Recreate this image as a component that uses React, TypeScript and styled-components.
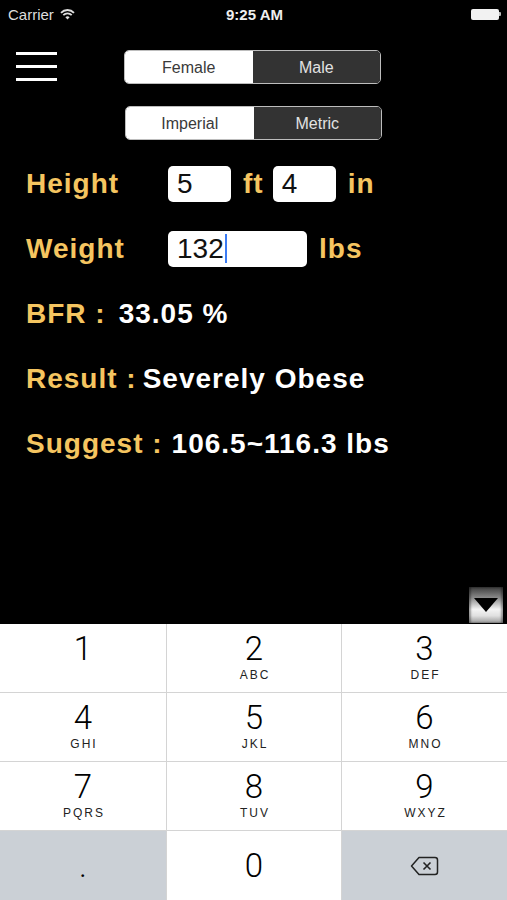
import React from 'react'
import styled, { createGlobalStyle } from 'styled-components'

const GlobalStyle = createGlobalStyle`
  html, body {
    margin: 0;
    padding: 0;
    background: #000;
  }
  * {
    box-sizing: border-box;
  }
`

const Screen = styled.div`
  width: 507px;
  height: 900px;
  background: #000;
  display: flex;
  flex-direction: column;
  font-family: 'Liberation Sans', Arial, sans-serif;
  overflow: hidden;
`

const StatusBar = styled.div`
  height: 28px;
  display: grid;
  grid-template-columns: 1fr auto 1fr;
  align-items: center;
  padding: 0 6px 0 8px;
  color: #ddd;
  font-size: 15px;
`

const Carrier = styled.div`
  display: flex;
  align-items: center;
  gap: 6px;
`

const Clock = styled.div`
  font-weight: 700;
  color: #eee;
`

const Battery = styled.div`
  justify-self: end;
  display: flex;
  align-items: center;
`

const BatteryBody = styled.div`
  width: 28px;
  height: 11px;
  background: #f2f2f2;
  border-radius: 2px;
`

const BatteryNub = styled.div`
  width: 2px;
  height: 4px;
  background: #bbb;
  border-radius: 0 1px 1px 0;
`

const Header = styled.div`
  display: flex;
  padding: 22px 0 0 16px;
`

const Burger = styled.div`
  width: 41px;
  margin-top: 2px;
  display: flex;
  flex-direction: column;
  gap: 10px;
`

const BurgerLine = styled.div`
  height: 3px;
  background: #fff;
`

const Segments = styled.div`
  margin-left: 67px;
  display: flex;
  flex-direction: column;
  gap: 22px;
`

const Segmented = styled.div<{ $shift?: number }>`
  display: flex;
  width: 257px;
  height: 34px;
  margin-left: ${({ $shift }) => $shift || 0}px;
  border: 1.5px solid #bdbdbd;
  border-radius: 5px;
  overflow: hidden;
`

const Segment = styled.div<{ $active?: boolean }>`
  flex: 1;
  display: flex;
  align-items: center;
  justify-content: center;
  font-size: 16px;
  padding-top: 1px;
  background: ${({ $active }) => ($active ? '#333' : '#fff')};
  color: ${({ $active }) => ($active ? '#e2e2e2' : '#3a3a3a')};
`

const Form = styled.div`
  margin-top: 11px;
  padding-left: 26px;
`

const Row = styled.div`
  height: 65px;
  display: flex;
  align-items: center;
`

const Label = styled.span<{ $width?: number }>`
  color: #f5c560;
  font-size: 28px;
  font-weight: 700;
  letter-spacing: 1px;
  width: ${({ $width }) => ($width ? `${$width}px` : 'auto')};
  flex-shrink: 0;
  white-space: nowrap;
`

const Unit = styled(Label)`
  margin: 0 9px 0 12px;
`

const Value = styled.span<{ $gap: number }>`
  color: #fff;
  font-size: 28px;
  font-weight: 700;
  letter-spacing: 1px;
  margin-left: ${({ $gap }) => $gap}px;
  white-space: nowrap;
`

const Field = styled.div<{ $width: number }>`
  width: ${({ $width }) => $width}px;
  height: 36px;
  background: #fff;
  border-radius: 5px;
  display: flex;
  align-items: center;
  padding-left: 9px;
  color: #111;
  font-size: 28px;
`

const Caret = styled.span`
  display: inline-block;
  width: 2px;
  height: 29px;
  margin-left: 1px;
  background: #3b7cf5;
`

const Spacer = styled.div`
  flex: 1;
  display: flex;
  align-items: flex-end;
  justify-content: flex-end;
  padding: 0 4px 1px 0;
`

const HideButton = styled.div`
  width: 34px;
  height: 36px;
  display: flex;
  align-items: center;
  justify-content: center;
  background: linear-gradient(
    to bottom,
    #3c3c3c 0%,
    #8a8a8a 30%,
    #f4f4f4 62%,
    #e0e0e0 80%,
    #9a9a9a 100%
  );
  box-shadow: inset 2px 0 2px rgba(0, 0, 0, 0.35), inset -2px 0 2px rgba(0, 0, 0, 0.35);
`

const Keyboard = styled.div`
  height: 276px;
  display: grid;
  grid-template-columns: 166px 174px 1fr;
  grid-template-rows: 68px 68px 68px 1fr;
  gap: 1px;
  background: #d4d4d4;
`

const Key = styled.div<{ $gray?: boolean }>`
  background: ${({ $gray }) => ($gray ? '#cbd0d6' : '#fff')};
  display: flex;
  flex-direction: column;
  align-items: center;
  justify-content: center;
  color: #000;
`

const Digit = styled.span`
  font-family: Roboto, 'Liberation Sans', sans-serif;
  font-weight: 300;
  font-size: 33px;
  line-height: 30px;
`

const Letters = styled.span`
  font-family: 'Liberation Sans', Arial, sans-serif;
  font-size: 12px;
  letter-spacing: 2px;
  margin-top: 4px;
  margin-right: -2px;
  color: #222;
  height: 14px;
`

const WifiIcon = () => (
  <svg width="15" height="11" viewBox="0 0 15 11">
    <path d="M1 3.8 A9 9 0 0 1 14 3.8" stroke="#ddd" strokeWidth="1.8" fill="none" />
    <path d="M3.3 6.2 A5.8 5.8 0 0 1 11.7 6.2" stroke="#ddd" strokeWidth="1.8" fill="none" />
    <path d="M7.5 10.5 L5.4 8.3 A3 3 0 0 1 9.6 8.3 Z" fill="#ddd" />
  </svg>
)

const DownTriangle = () => (
  <svg width="24" height="14" viewBox="0 0 24 14">
    <polygon points="0,0 24,0 12,14" fill="#000" />
  </svg>
)

const BackspaceIcon = () => (
  <svg width="29" height="20" viewBox="0 0 29 20">
    <path
      d="M9 1.5 H25 A2.5 2.5 0 0 1 27.5 4 V16 A2.5 2.5 0 0 1 25 18.5 H9 L1.5 10 Z"
      fill="none"
      stroke="#222"
      strokeWidth="1.5"
      strokeLinejoin="round"
    />
    <path d="M13.5 6.5 L20.5 13.5 M20.5 6.5 L13.5 13.5" stroke="#222" strokeWidth="1.6" />
  </svg>
)

const keys = [
  { d: '1', l: '' },
  { d: '2', l: 'ABC' },
  { d: '3', l: 'DEF' },
  { d: '4', l: 'GHI' },
  { d: '5', l: 'JKL' },
  { d: '6', l: 'MNO' },
  { d: '7', l: 'PQRS' },
  { d: '8', l: 'TUV' },
  { d: '9', l: 'WXYZ' }
]

const App: React.FC = () => {
  return (
    <Screen>
      <GlobalStyle />
      <StatusBar>
        <Carrier>
          Carrier
          <WifiIcon />
        </Carrier>
        <Clock>9:25 AM</Clock>
        <Battery>
          <BatteryBody />
          <BatteryNub />
        </Battery>
      </StatusBar>

      <Header>
        <Burger>
          <BurgerLine />
          <BurgerLine />
          <BurgerLine />
        </Burger>
        <Segments>
          <Segmented>
            <Segment>Female</Segment>
            <Segment $active>Male</Segment>
          </Segmented>
          <Segmented $shift={1}>
            <Segment>Imperial</Segment>
            <Segment $active>Metric</Segment>
          </Segmented>
        </Segments>
      </Header>

      <Form>
        <Row>
          <Label $width={142}>Height</Label>
          <Field $width={63}>5</Field>
          <Unit>ft</Unit>
          <Field $width={63}>4</Field>
          <Unit>in</Unit>
        </Row>
        <Row>
          <Label $width={142}>Weight</Label>
          <Field $width={139}>
            132
            <Caret />
          </Field>
          <Unit>lbs</Unit>
        </Row>
        <Row>
          <Label>BFR :</Label>
          <Value $gap={13}>33.05 %</Value>
        </Row>
        <Row>
          <Label>Result :</Label>
          <Value $gap={6}>Severely Obese</Value>
        </Row>
        <Row>
          <Label>Suggest :</Label>
          <Value $gap={9}>106.5~116.3 lbs</Value>
        </Row>
      </Form>

      <Spacer>
        <HideButton>
          <DownTriangle />
        </HideButton>
      </Spacer>

      <Keyboard>
        {keys.map((k) => (
          <Key key={k.d}>
            <Digit>{k.d}</Digit>
            <Letters>{k.l}</Letters>
          </Key>
        ))}
        <Key $gray>
          <Digit>.</Digit>
        </Key>
        <Key>
          <Digit>0</Digit>
        </Key>
        <Key $gray>
          <BackspaceIcon />
        </Key>
      </Keyboard>
    </Screen>
  )
}

export default App
